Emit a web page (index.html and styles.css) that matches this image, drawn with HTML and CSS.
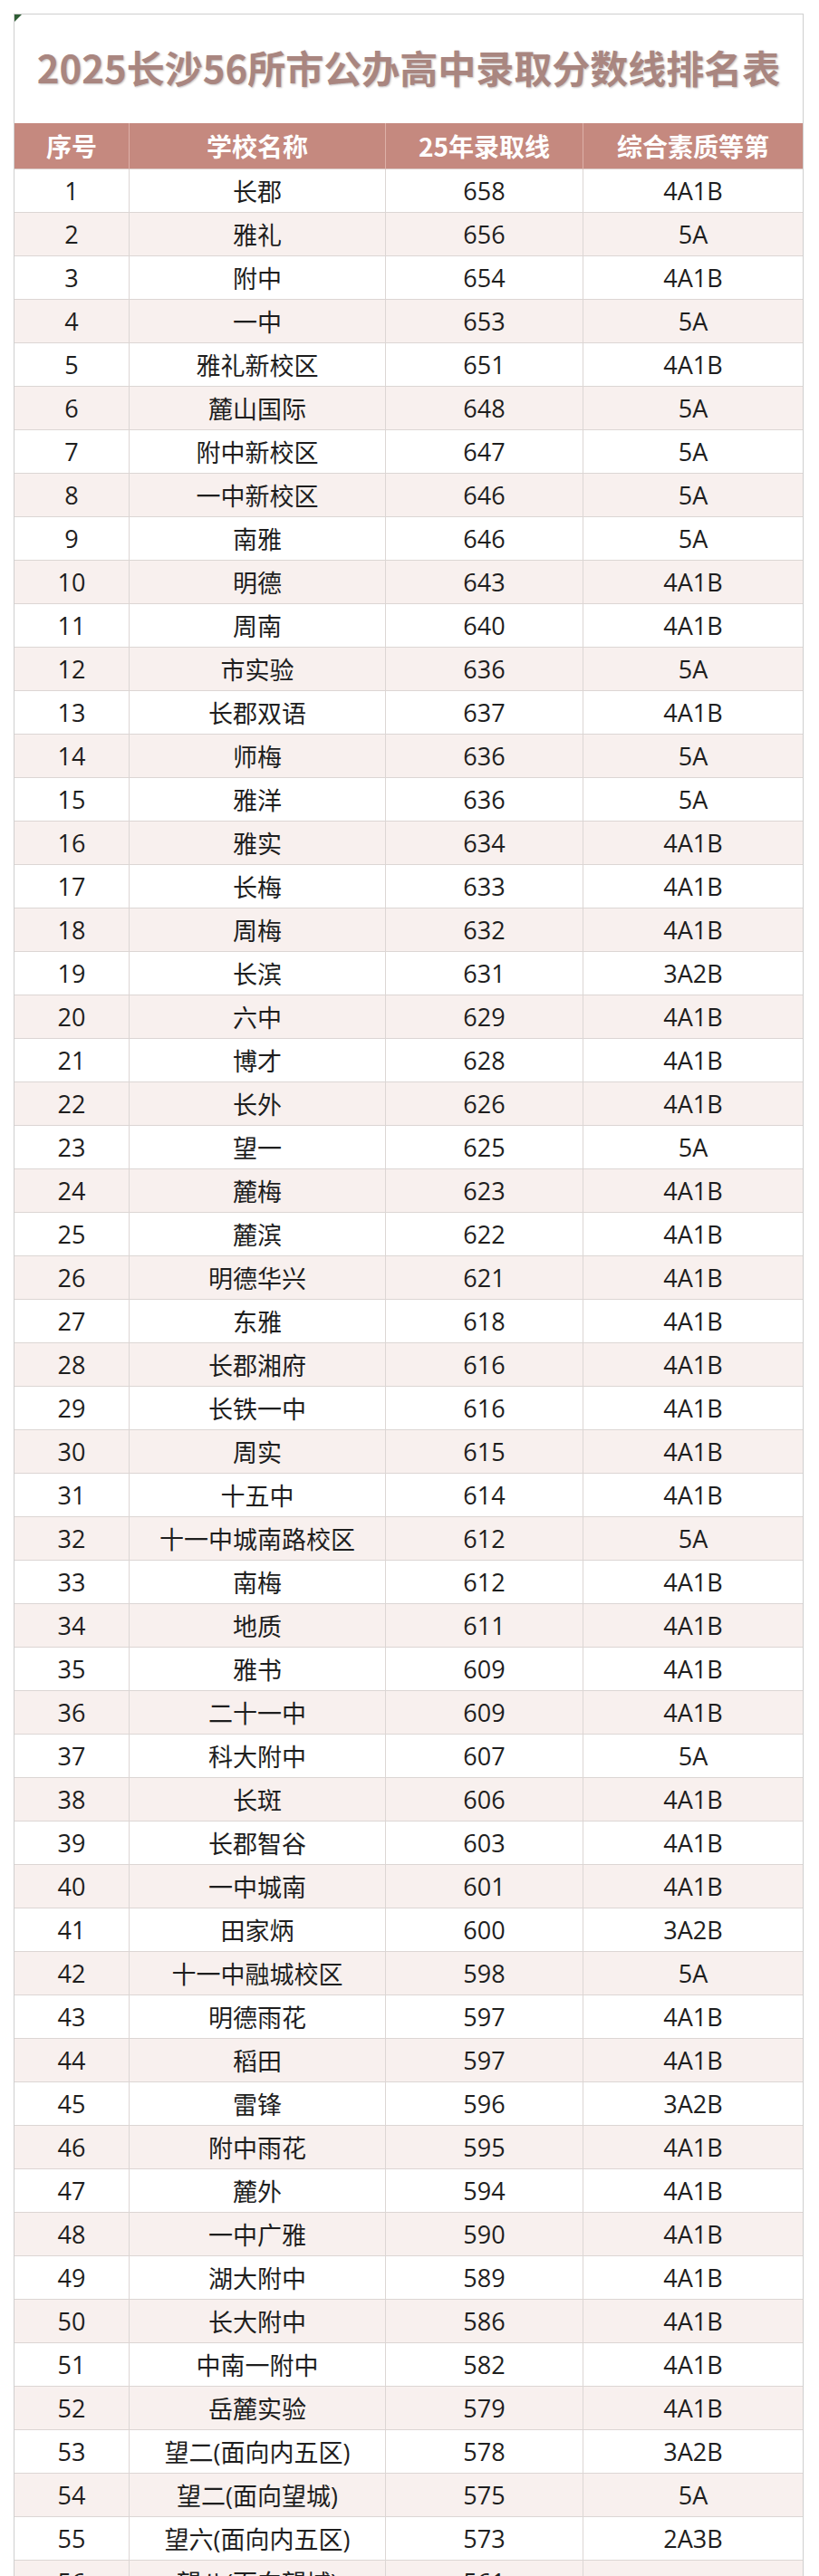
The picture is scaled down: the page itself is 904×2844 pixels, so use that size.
FILE: index.html
```html
<!DOCTYPE html>
<html lang="zh-CN">
<head>
<meta charset="utf-8">
<title>2025长沙56所市公办高中录取分数线排名表</title>
<link rel="stylesheet" href="styles.css">
</head>
<body>
<div class="sheet">
  <span class="corner"></span>
  <h1 class="title">2025长沙56所市公办高中录取分数线排名表</h1>
  <div class="table">
    <div class="row head"><div>序号</div><div>学校名称</div><div>25年录取线</div><div>综合素质等第</div></div>
    <div class="row"><div>1</div><div>长郡</div><div>658</div><div>4A1B</div></div>
    <div class="row"><div>2</div><div>雅礼</div><div>656</div><div>5A</div></div>
    <div class="row"><div>3</div><div>附中</div><div>654</div><div>4A1B</div></div>
    <div class="row"><div>4</div><div>一中</div><div>653</div><div>5A</div></div>
    <div class="row"><div>5</div><div>雅礼新校区</div><div>651</div><div>4A1B</div></div>
    <div class="row"><div>6</div><div>麓山国际</div><div>648</div><div>5A</div></div>
    <div class="row"><div>7</div><div>附中新校区</div><div>647</div><div>5A</div></div>
    <div class="row"><div>8</div><div>一中新校区</div><div>646</div><div>5A</div></div>
    <div class="row"><div>9</div><div>南雅</div><div>646</div><div>5A</div></div>
    <div class="row"><div>10</div><div>明德</div><div>643</div><div>4A1B</div></div>
    <div class="row"><div>11</div><div>周南</div><div>640</div><div>4A1B</div></div>
    <div class="row"><div>12</div><div>市实验</div><div>636</div><div>5A</div></div>
    <div class="row"><div>13</div><div>长郡双语</div><div>637</div><div>4A1B</div></div>
    <div class="row"><div>14</div><div>师梅</div><div>636</div><div>5A</div></div>
    <div class="row"><div>15</div><div>雅洋</div><div>636</div><div>5A</div></div>
    <div class="row"><div>16</div><div>雅实</div><div>634</div><div>4A1B</div></div>
    <div class="row"><div>17</div><div>长梅</div><div>633</div><div>4A1B</div></div>
    <div class="row"><div>18</div><div>周梅</div><div>632</div><div>4A1B</div></div>
    <div class="row"><div>19</div><div>长滨</div><div>631</div><div>3A2B</div></div>
    <div class="row"><div>20</div><div>六中</div><div>629</div><div>4A1B</div></div>
    <div class="row"><div>21</div><div>博才</div><div>628</div><div>4A1B</div></div>
    <div class="row"><div>22</div><div>长外</div><div>626</div><div>4A1B</div></div>
    <div class="row"><div>23</div><div>望一</div><div>625</div><div>5A</div></div>
    <div class="row"><div>24</div><div>麓梅</div><div>623</div><div>4A1B</div></div>
    <div class="row"><div>25</div><div>麓滨</div><div>622</div><div>4A1B</div></div>
    <div class="row"><div>26</div><div>明德华兴</div><div>621</div><div>4A1B</div></div>
    <div class="row"><div>27</div><div>东雅</div><div>618</div><div>4A1B</div></div>
    <div class="row"><div>28</div><div>长郡湘府</div><div>616</div><div>4A1B</div></div>
    <div class="row"><div>29</div><div>长铁一中</div><div>616</div><div>4A1B</div></div>
    <div class="row"><div>30</div><div>周实</div><div>615</div><div>4A1B</div></div>
    <div class="row"><div>31</div><div>十五中</div><div>614</div><div>4A1B</div></div>
    <div class="row"><div>32</div><div>十一中城南路校区</div><div>612</div><div>5A</div></div>
    <div class="row"><div>33</div><div>南梅</div><div>612</div><div>4A1B</div></div>
    <div class="row"><div>34</div><div>地质</div><div>611</div><div>4A1B</div></div>
    <div class="row"><div>35</div><div>雅书</div><div>609</div><div>4A1B</div></div>
    <div class="row"><div>36</div><div>二十一中</div><div>609</div><div>4A1B</div></div>
    <div class="row"><div>37</div><div>科大附中</div><div>607</div><div>5A</div></div>
    <div class="row"><div>38</div><div>长斑</div><div>606</div><div>4A1B</div></div>
    <div class="row"><div>39</div><div>长郡智谷</div><div>603</div><div>4A1B</div></div>
    <div class="row"><div>40</div><div>一中城南</div><div>601</div><div>4A1B</div></div>
    <div class="row"><div>41</div><div>田家炳</div><div>600</div><div>3A2B</div></div>
    <div class="row"><div>42</div><div>十一中融城校区</div><div>598</div><div>5A</div></div>
    <div class="row"><div>43</div><div>明德雨花</div><div>597</div><div>4A1B</div></div>
    <div class="row"><div>44</div><div>稻田</div><div>597</div><div>4A1B</div></div>
    <div class="row"><div>45</div><div>雷锋</div><div>596</div><div>3A2B</div></div>
    <div class="row"><div>46</div><div>附中雨花</div><div>595</div><div>4A1B</div></div>
    <div class="row"><div>47</div><div>麓外</div><div>594</div><div>4A1B</div></div>
    <div class="row"><div>48</div><div>一中广雅</div><div>590</div><div>4A1B</div></div>
    <div class="row"><div>49</div><div>湖大附中</div><div>589</div><div>4A1B</div></div>
    <div class="row"><div>50</div><div>长大附中</div><div>586</div><div>4A1B</div></div>
    <div class="row"><div>51</div><div>中南一附中</div><div>582</div><div>4A1B</div></div>
    <div class="row"><div>52</div><div>岳麓实验</div><div>579</div><div>4A1B</div></div>
    <div class="row"><div>53</div><div>望二(面向内五区)</div><div>578</div><div>3A2B</div></div>
    <div class="row"><div>54</div><div>望二(面向望城)</div><div>575</div><div>5A</div></div>
    <div class="row"><div>55</div><div>望六(面向内五区)</div><div>573</div><div>2A3B</div></div>
    <div class="row"><div>56</div><div>望八(面向望城)</div><div>561</div><div class="mark"><span class="dot"></span>头条 @长沙升学说</div></div>
  </div>
</div>
</body>
</html>
```

FILE: styles.css
```css
html, body {
  margin: 0;
  padding: 0;
  background: #ffffff;
}

body {
  font-family: "Open Sans", "Noto Sans CJK SC", sans-serif;
  color: #1e1e1e;
}

.sheet {
  position: relative;
  width: 872px;
  margin: 15px 0 0 15px;
  border: 1px solid #cfcfcf;
  box-sizing: border-box;
  background: #fff;
}

.corner {
  position: absolute;
  left: 0;
  top: 0;
  width: 0;
  height: 0;
  border-top: 8px solid #2f5d35;
  border-right: 8px solid transparent;
}

.title {
  margin: 0;
  height: 120px;
  display: flex;
  align-items: center;
  justify-content: center;
  padding-bottom: 6px;
  box-sizing: border-box;
  font-family: "Noto Sans CJK SC", sans-serif;
  font-weight: 700;
  font-size: 42px;
  color: #a98680;
  text-shadow: 1px 1px 2px rgba(120, 110, 110, 0.45);
  white-space: nowrap;
}

.table {
  display: flex;
  flex-direction: column;
}

.row {
  display: grid;
  grid-template-columns: 127px 283px 218px 242px;
  height: 48px;
  font-size: 27px;
}

.row > div {
  display: flex;
  align-items: center;
  justify-content: center;
  border-right: 1px solid #dcd6d4;
  border-bottom: 1px solid #dcd6d4;
  white-space: nowrap;
  overflow: hidden;
}

.row > div:last-child {
  border-right: none;
}

.row:nth-child(odd):not(.head) {
  background: #f8f0ee;
}

.row.head {
  height: 51px;
  background: #c5897f;
  color: #ffffff;
  font-family: "Noto Sans CJK SC", sans-serif;
  font-weight: 700;
  font-size: 28px;
}

.row.head > div {
  border-right: 1px solid #ddb0a8;
  border-bottom: 1px solid #d8c8c4;
}

.row.head > div:last-child {
  border-right: none;
}

.row > div.mark {
  justify-content: flex-start;
  align-items: flex-end;
  padding: 0 0 4px 8px;
  gap: 10px;
  font-size: 22px;
  color: #7a7a7a;
}

.mark .dot {
  flex: none;
  width: 18px;
  height: 18px;
  margin-bottom: 4px;
  border-radius: 50%;
  background: #777;
}
```
